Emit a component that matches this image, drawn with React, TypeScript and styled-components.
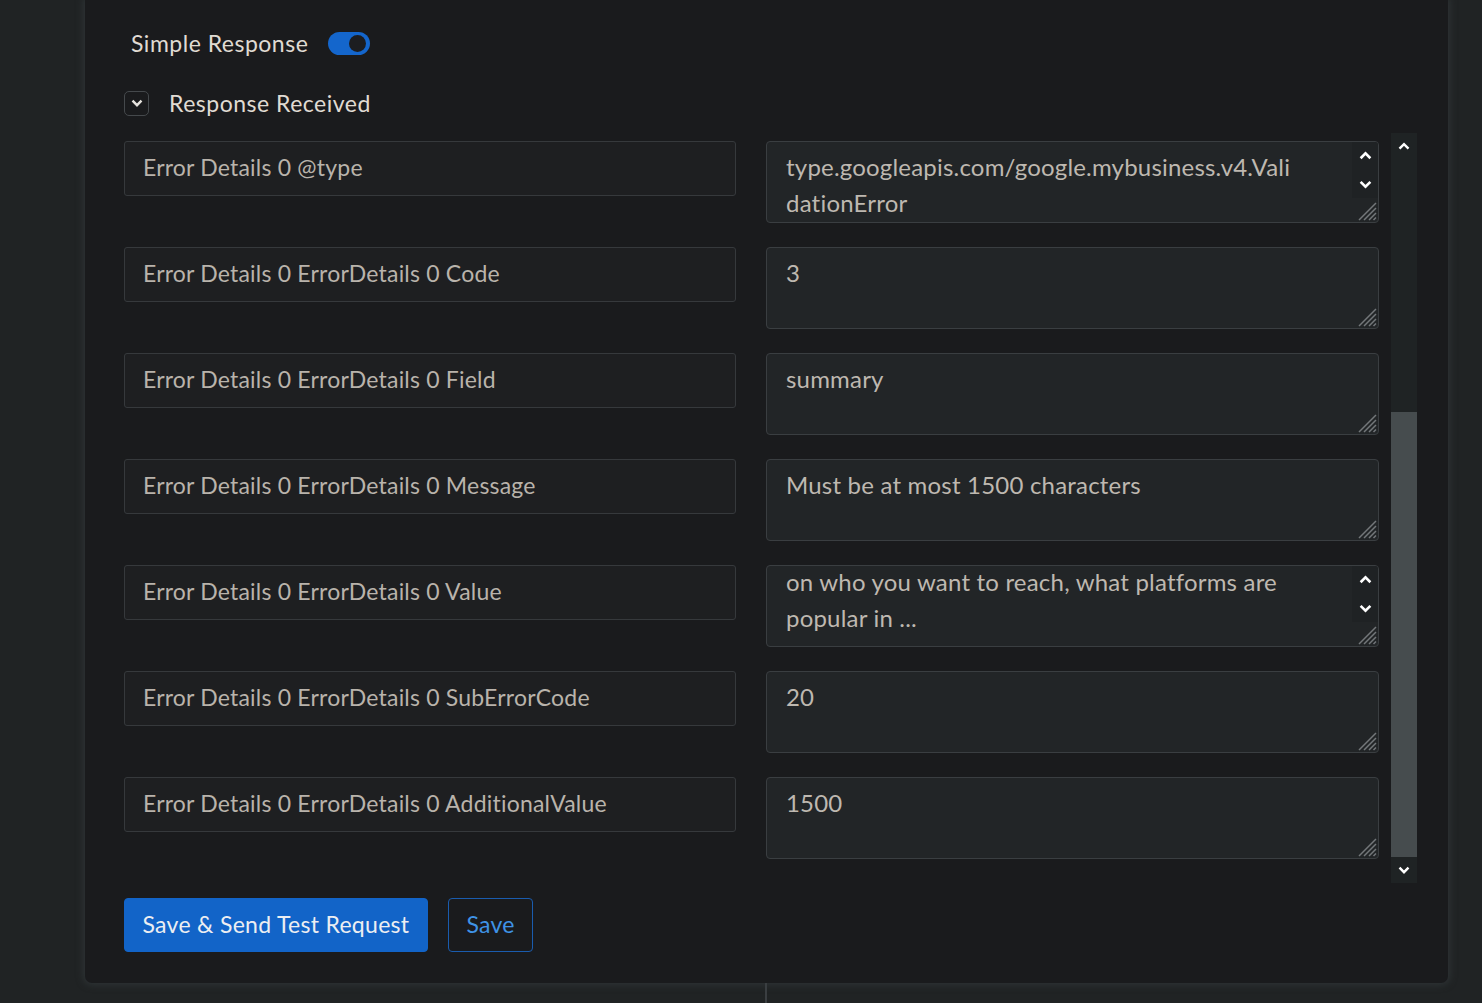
import React from "react";
import styled, { createGlobalStyle } from "styled-components";

const Global = createGlobalStyle`
  html, body { margin: 0; padding: 0; background: #202324; }
  body { font-family: "Lato", "Open Sans", sans-serif; color: #ddd8d0; }
  * { box-sizing: border-box; }
`;

const Page = styled.div`
  width: 1482px;
  height: 1003px;
  overflow: hidden;
  background: #202324;
  display: flex;
  flex-direction: column;
`;

const Card = styled.section`
  margin-left: 85px;
  width: 1363px;
  height: 983px;
  background: #1a1b1d;
  border-radius: 0 0 7px 7px;
  box-shadow: 0 0 7px 2px rgba(48, 53, 55, 0.9);
  padding: 27px 31px 31px 39px;
  display: flex;
  flex-direction: column;
`;

const Footer = styled.div`
  flex: 1;
  display: grid;
  grid-template-columns: 765px 2px 1fr;
`;

const FooterLine = styled.div`
  grid-column: 2;
  background: #3a3e41;
`;

const ToggleRow = styled.div`
  display: flex;
  align-items: center;
  gap: 20px;
  padding-left: 7px;
  height: 32px;
`;

const Label = styled.span`
  font-size: 23px;
  color: #e0dbd3;
  letter-spacing: 0.5px;
`;

const Switch = styled.div`
  width: 42px;
  height: 23px;
  border-radius: 12px;
  background: #1466cc;
  display: flex;
  align-items: center;
  justify-content: flex-end;
  padding-right: 4px;
`;

const Knob = styled.div`
  width: 17px;
  height: 17px;
  border-radius: 50%;
  background: #1c1d20;
`;

const AccordionRow = styled.div`
  display: flex;
  align-items: center;
  gap: 20px;
  margin-top: 29px;
  height: 30px;
`;

const CheckBox = styled.div`
  width: 25px;
  height: 25px;
  border: 1px solid #45494c;
  border-radius: 5px;
  display: flex;
  align-items: center;
  justify-content: center;
  color: #e6e3de;
`;

const ScrollArea = styled.div`
  margin-top: 15px;
  height: 750px;
  display: flex;
  gap: 12px;
`;

const Rows = styled.div`
  flex: 1;
  display: flex;
  flex-direction: column;
  gap: 24px;
  padding-top: 8px;
`;

const Row = styled.div`
  display: grid;
  grid-template-columns: 612px 613px;
  column-gap: 30px;
  align-items: start;
`;

const KeyInput = styled.div`
  height: 55px;
  border: 1px solid #36393c;
  border-radius: 3px;
  background: #1e1f21;
  padding: 0 18px 3px;
  display: flex;
  align-items: center;
  font-size: 23px;
  color: #b9b3ab;
  letter-spacing: 0.2px;
  white-space: nowrap;
`;

const ValueBox = styled.div`
  position: relative;
  height: 82px;
  border: 1px solid #3a3e41;
  border-radius: 4px;
  background: #222527;
  padding: 0 40px 0 19px;
  font-size: 24px;
  line-height: 36px;
  color: #beb8b0;
  letter-spacing: 0.2px;
  overflow: hidden;
`;

const ValueText = styled.div<{ $shift?: boolean }>`
  margin-top: ${(p) => (p.$shift ? "-2px" : "7px")};
`;

const Line = styled.div`
  white-space: nowrap;
`;

const Spinner = styled.div`
  position: absolute;
  right: 0;
  top: 0;
  width: 26px;
  height: 56px;
  background: #1f2224;
  display: flex;
  flex-direction: column;
  align-items: center;
  padding-top: 9px;
  gap: 20px;
`;

const Resizer = styled.svg`
  position: absolute;
  right: 1px;
  bottom: 1px;
`;

const ScrollBar = styled.div`
  width: 26px;
  display: flex;
  flex-direction: column;
  background: #1f2324;
`;

const ScrollBtn = styled.div`
  height: 26px;
  display: flex;
  align-items: center;
  justify-content: center;
`;

const Track = styled.div`
  flex: 1;
  display: flex;
  flex-direction: column;
  justify-content: flex-end;
`;

const Thumb = styled.div`
  height: 445px;
  background: #464c4e;
`;

const Actions = styled.div`
  margin-top: 15px;
  display: flex;
  gap: 20px;
`;

const Button = styled.button<{ $primary?: boolean }>`
  height: 54px;
  padding: 0 17.5px 2px;
  border-radius: 4px;
  font-family: "Lato", "Open Sans", sans-serif;
  font-size: 23px;
  letter-spacing: 0.3px;
  border: 1px solid ${(p) => (p.$primary ? "#1264c8" : "#1a5cae")};
  background: ${(p) => (p.$primary ? "#1264c8" : "transparent")};
  color: ${(p) => (p.$primary ? "#eceef2" : "#3f93e6")};
`;

const Chevron = ({ up, size = 12, color = "#fff" }: { up?: boolean; size?: number; color?: string }) => (
  <svg width={size} height={size * 0.7} viewBox="0 0 12 8">
    <path
      d={up ? "M1.5 6.5 L6 2 L10.5 6.5" : "M1.5 1.5 L6 6 L10.5 1.5"}
      fill="none"
      stroke={color}
      strokeWidth={2.4}
    />
  </svg>
);

const Grip = () => (
  <Resizer width="20" height="20" viewBox="0 0 20 20">
    <path d="M19 2 L2 19 M19 7 L7 19 M19 12 L12 19 M19 16.5 L16.5 19" stroke="#73777a" strokeWidth="1.5" />
  </Resizer>
);

type RowData = { key: string; lines: string[]; spin?: boolean; shift?: boolean };

const rows: RowData[] = [
  { key: "Error Details 0 @type", lines: ["type.googleapis.com/google.mybusiness.v4.Vali", "dationError"], spin: true },
  { key: "Error Details 0 ErrorDetails 0 Code", lines: ["3"] },
  { key: "Error Details 0 ErrorDetails 0 Field", lines: ["summary"] },
  { key: "Error Details 0 ErrorDetails 0 Message", lines: ["Must be at most 1500 characters"] },
  {
    key: "Error Details 0 ErrorDetails 0 Value",
    lines: ["on who you want to reach, what platforms are", "popular in ..."],
    spin: true,
    shift: true,
  },
  { key: "Error Details 0 ErrorDetails 0 SubErrorCode", lines: ["20"] },
  { key: "Error Details 0 ErrorDetails 0 AdditionalValue", lines: ["1500"] },
];

export default function App() {
  return (
    <Page>
      <Global />
      <Card>
        <ToggleRow>
          <Label>Simple Response</Label>
          <Switch>
            <Knob />
          </Switch>
        </ToggleRow>
        <AccordionRow>
          <CheckBox>
            <Chevron size={12} color="#e6e3de" />
          </CheckBox>
          <Label>Response Received</Label>
        </AccordionRow>
        <ScrollArea>
          <Rows>
            {rows.map((r) => (
              <Row key={r.key}>
                <KeyInput>{r.key}</KeyInput>
                <ValueBox>
                  <ValueText $shift={r.shift}>
                    {r.lines.map((l) => (
                      <Line key={l}>{l}</Line>
                    ))}
                  </ValueText>
                  {r.spin && (
                    <Spinner>
                      <Chevron up size={13} />
                      <Chevron size={13} />
                    </Spinner>
                  )}
                  <Grip />
                </ValueBox>
              </Row>
            ))}
          </Rows>
          <ScrollBar>
            <ScrollBtn>
              <Chevron up size={12} />
            </ScrollBtn>
            <Track>
              <Thumb />
            </Track>
            <ScrollBtn>
              <Chevron size={12} />
            </ScrollBtn>
          </ScrollBar>
        </ScrollArea>
        <Actions>
          <Button $primary>Save &amp; Send Test Request</Button>
          <Button>Save</Button>
        </Actions>
      </Card>
      <Footer>
        <FooterLine />
      </Footer>
    </Page>
  );
}
